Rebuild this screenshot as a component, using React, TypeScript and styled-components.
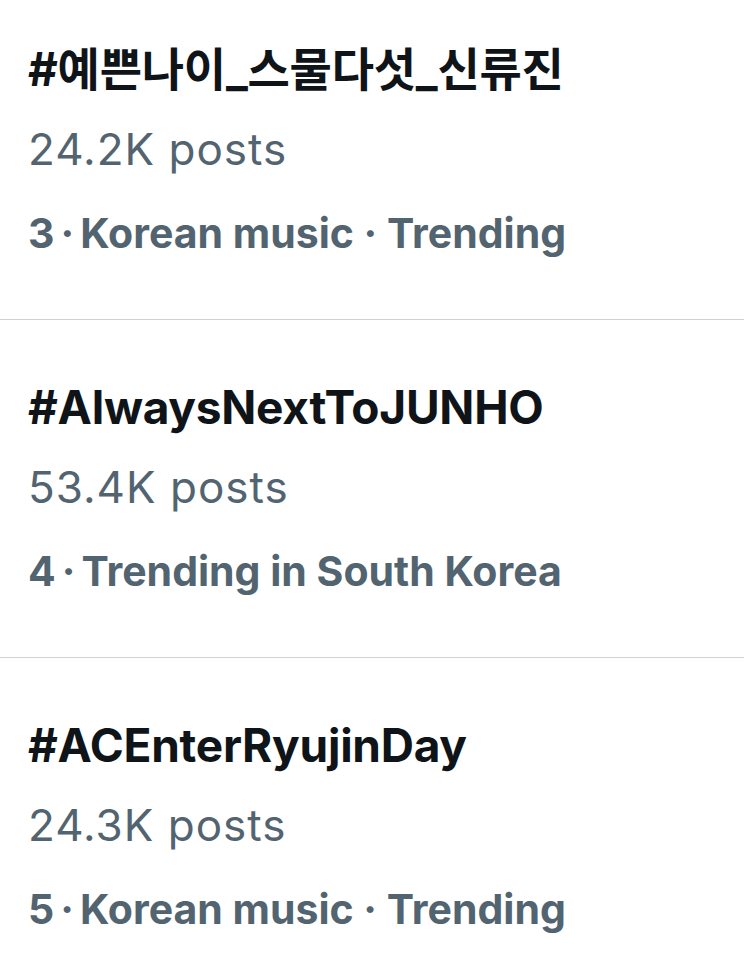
import React from "react";
import styled, { createGlobalStyle } from "styled-components";

const GlobalStyle = createGlobalStyle`
  html, body {
    margin: 0;
    padding: 0;
    background: #ffffff;
  }
  body {
    font-family: Inter, "Noto Sans CJK KR", "Noto Sans", sans-serif;
    -webkit-font-smoothing: antialiased;
  }
`;

const List = styled.div`
  width: 744px;
  display: flex;
  flex-direction: column;
`;

const Item = styled.div<{ $first?: boolean }>`
  padding: ${(p) => (p.$first ? "29px" : "47px")} 0 46px 28px;
  border-bottom: 1px solid #cfd3d6;
  &:last-child {
    border-bottom: none;
  }
`;

const Title = styled.div`
  font-size: 46px;
  line-height: 80px;
  font-weight: 700;
  color: #0f1419;
  letter-spacing: -0.25px;
  white-space: nowrap;
`;

const Posts = styled.div`
  font-size: 44px;
  line-height: 80px;
  font-weight: 400;
  color: #536471;
  letter-spacing: 1px;
  white-space: nowrap;
`;

const Meta = styled.div`
  margin-top: 4px;
  font-size: 41px;
  line-height: 80px;
  font-weight: 700;
  color: #536471;
  white-space: nowrap;
`;

const Dot = styled.span`
  margin: 0 6px;
`;

type Trend = { tag: string; posts: string; rank: number; context: string };

const trends: Trend[] = [
  { tag: "#예쁜나이_스물다섯_신류진", posts: "24.2K posts", rank: 3, context: "Korean music · Trending" },
  { tag: "#AlwaysNextToJUNHO", posts: "53.4K posts", rank: 4, context: "Trending in South Korea" },
  { tag: "#ACEnterRyujinDay", posts: "24.3K posts", rank: 5, context: "Korean music · Trending" },
];

export default function App() {
  return (
    <>
      <GlobalStyle />
      <List>
        {trends.map((t, i) => (
          <Item key={t.tag} $first={i === 0}>
            <Title>{t.tag}</Title>
            <Posts>{t.posts}</Posts>
            <Meta>
              {t.rank}
              <Dot>·</Dot>
              {t.context}
            </Meta>
          </Item>
        ))}
      </List>
    </>
  );
}
